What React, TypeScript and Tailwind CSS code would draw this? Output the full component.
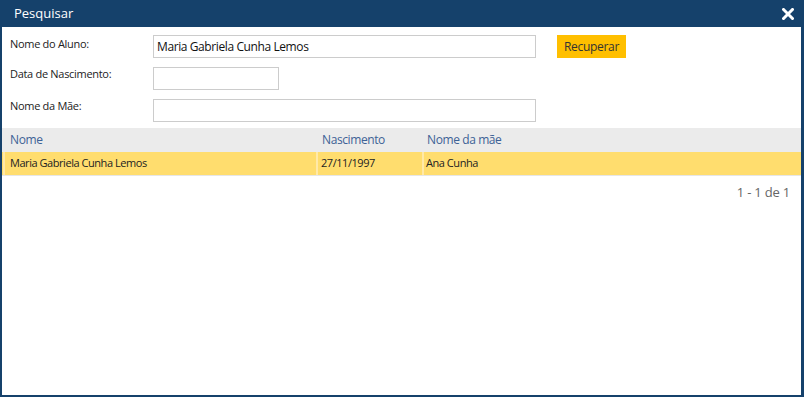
import React from 'react';

const App: React.FC = () => {
  return (
    <div
      className="w-[804px] h-[397px] bg-[#15416b] flex flex-col pl-[2px] pr-[3px] pb-[2px]"
      style={{ fontFamily: '"Open Sans", "Noto Sans", sans-serif' }}
    >
      {/* Title bar */}
      <div className="h-[27px] flex items-center justify-between pl-[12px] pr-[4px] text-white">
        <span className="text-[13px] leading-none">Pesquisar</span>
        <svg width="12" height="12" viewBox="0 0 12 12" className="mr-[3px]">
          <path d="M1.5 1.5 L10.5 10.5 M10.5 1.5 L1.5 10.5" stroke="white" strokeWidth="3" strokeLinecap="square" />
        </svg>
      </div>

      <div className="flex-1 bg-white flex flex-col">
        {/* Form */}
        <div className="flex flex-col gap-[9px] pt-[8px] pl-[8px]">
          <div className="flex items-center h-[23px]">
            <label className="w-[143px] text-[11px] tracking-[-0.3px] text-[#222] -mt-[4px]">Nome do Aluno:</label>
            <div className="w-[383px] h-[23px] border border-[#cccccc] flex items-center px-[3px] text-[12px] tracking-[-0.4px] text-[#111]">
              Maria Gabriela Cunha Lemos
            </div>
            <button className="ml-[21px] w-[69px] h-[23px] bg-[#ffbf00] text-[12px] tracking-[-0.3px] text-[#333]">
              Recuperar
            </button>
          </div>
          <div className="flex items-center h-[23px]">
            <label className="w-[143px] text-[11px] tracking-[-0.3px] text-[#222] -mt-[8px]">Data de Nascimento:</label>
            <div className="w-[126px] h-[23px] border border-[#cccccc]" />
          </div>
          <div className="flex items-center h-[23px]">
            <label className="w-[143px] text-[11px] tracking-[-0.3px] text-[#222] -mt-[8px]">Nome da Mãe:</label>
            <div className="w-[383px] h-[23px] border border-[#cccccc]" />
          </div>
        </div>

        {/* Table */}
        <div className="mt-[6px]">
          <div className="flex h-[24px] bg-[#ebebeb] items-center text-[12px] tracking-[-0.4px] text-[#3d6296]">
            <div className="w-[314px] pl-[8px]">Nome</div>
            <div className="w-[106px] pl-[6px]">Nascimento</div>
            <div className="flex-1 pl-[5px]">Nome da mãe</div>
          </div>
          <div className="flex h-[24px] bg-[#ffdd6e] items-center text-[11px] tracking-[-0.45px] text-[#222] border-b border-[#e6e6e6]">
            <div className="w-[313px] h-full flex items-center pl-[5px] border-l-2 border-[#ffe9a8] ml-[1px]">
              Maria Gabriela Cunha Lemos
            </div>
            <div className="w-[106px] h-full flex items-center pl-[3px] border-l-2 border-[#ffe9a8]">27/11/1997</div>
            <div className="flex-1 h-full flex items-center pl-[2px] border-l-2 border-[#ffe9a8]">Ana Cunha</div>
          </div>
          <div className="flex justify-end pr-[11px] pt-[7px] text-[13px] tracking-[-0.2px] text-[#666]">1 - 1 de 1</div>
        </div>
      </div>
    </div>
  );
};

export default App;
